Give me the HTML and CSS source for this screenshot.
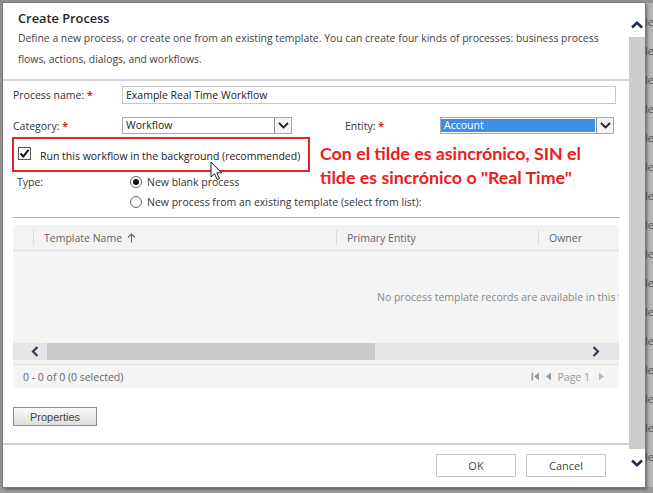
FILE: index.html
```html
<!DOCTYPE html>
<html>
<head>
<meta charset="utf-8">
<link rel="stylesheet" href="styles.css">
</head>
<body>
<div class="desktop">
  <div class="dialog">
    <div class="content">
      <header class="head">
        <h1 class="title">Create Process</h1>
        <p class="desc">Define a new process, or create one from an existing template. You can create four kinds of processes: business process<br>flows, actions, dialogs, and workflows.</p>
      </header>
      <div class="form">
        <div class="row row-name">
          <span class="lbl lbl-main">Process name: <span class="req">*</span></span>
          <div class="input">Example Real Time Workflow</div>
        </div>
        <div class="row row-cat">
          <span class="lbl lbl-main">Category: <span class="req">*</span></span>
          <div class="select sel-cat"><span class="sel-text">Workflow</span><span class="sel-arrow"><svg width="11" height="7" viewBox="0 0 11 7"><polyline points="1,1 5.5,5.5 10,1" fill="none" stroke="#222" stroke-width="1.8"/></svg></span></div>
          <span class="lbl lbl-entity">Entity: <span class="req">*</span></span>
          <div class="select sel-entity"><span class="sel-text sel-on">Account</span><span class="sel-arrow"><svg width="11" height="7" viewBox="0 0 11 7"><polyline points="1,1 5.5,5.5 10,1" fill="none" stroke="#222" stroke-width="1.8"/></svg></span></div>
        </div>
        <div class="highlight">
          <span class="checkbox"><svg width="11" height="11" viewBox="0 0 11 11"><polyline points="1.5,5.5 4.3,8.5 9.5,1.8" fill="none" stroke="#111" stroke-width="2"/></svg></span>
          <span class="chk-label">Run this workflow in the background (recommended)</span>
        </div>
        <div class="row row-type">
          <span class="lbl lbl-type">Type:</span>
          <span class="radio radio-on"></span>
          <span class="opt">New blank process</span>
        </div>
        <div class="row row-radio2">
          <span class="radio"></span>
          <span class="opt">New process from an existing template (select from list):</span>
        </div>
      </div>
      <div class="sep"></div>
      <div class="grid">
        <div class="grid-head">
          <span class="col col-first"></span>
          <span class="col col-name">Template Name <svg width="9" height="10" viewBox="0 0 9 10"><path d="M4.5 9.5V1M1 4.5L4.5 1L8 4.5" fill="none" stroke="#666" stroke-width="1.1"/></svg></span>
          <span class="col col-entity">Primary Entity</span>
          <span class="col col-owner">Owner</span>
        </div>
        <div class="grid-body">
          <span class="empty">No process template records are available in this v</span>
        </div>
        <div class="hscroll">
          <span class="hs-btn"><svg width="8" height="11" viewBox="0 0 8 11"><polyline points="6.5,1 2,5.5 6.5,10" fill="none" stroke="#2a3e5c" stroke-width="2.2"/></svg></span>
          <span class="hs-thumb"></span>
          <span class="hs-track"></span>
          <span class="hs-btn hs-right"><svg width="8" height="11" viewBox="0 0 8 11"><polyline points="1.5,1 6,5.5 1.5,10" fill="none" stroke="#2a3e5c" stroke-width="2.2"/></svg></span>
        </div>
        <div class="grid-foot">
          <span class="count">0 - 0 of 0 (0 selected)</span>
          <span class="pager">
            <svg width="9" height="9" viewBox="0 0 9 9"><rect x="0.5" y="0.5" width="1.6" height="8" fill="#9a9a9a"/><polygon points="8,0.5 3,4.5 8,8.5" fill="#9a9a9a"/></svg>
            <svg width="7" height="9" viewBox="0 0 7 9"><polygon points="6,0.5 1,4.5 6,8.5" fill="#9a9a9a"/></svg>
            <span class="page">Page 1</span>
            <svg width="7" height="9" viewBox="0 0 7 9"><polygon points="1,0.5 6,4.5 1,8.5" fill="#b8b8b8"/></svg>
          </span>
        </div>
      </div>
      <div class="props-area">
        <button class="btn-props">Properties</button>
      </div>
      <footer class="foot">
        <button class="btn">OK</button>
        <button class="btn">Cancel</button>
      </footer>
    </div>
    <div class="vscroll">
      <div class="vs-up"><svg width="12" height="8" viewBox="0 0 12 8"><polyline points="1,6.5 6,1.8 11,6.5" fill="none" stroke="#1d2f50" stroke-width="2.6"/></svg></div>
      <div class="vs-track"></div>
      <div class="vs-down"><svg width="12" height="8" viewBox="0 0 12 8"><polyline points="1,1.5 6,6.2 11,1.5" fill="none" stroke="#1d2f50" stroke-width="2.6"/></svg></div>
    </div>
  </div>
  <div class="behind">
    <span>le</span><span>le</span><span>le</span><span>le</span><span>le</span><span>le</span><span>le</span><span>le</span><span>le</span><span>le</span><span>le</span><span>le</span><span>le</span><span>le</span><span>le</span><span>le</span>
  </div>
</div>
<div class="bottom-strip"></div>
<p class="note">Con el tilde es asincrónico, SIN el<br>tilde es sincrónico o "Real Time"</p>
<svg class="cursor" width="13" height="20" viewBox="0 0 13 20"><path d="M1 1V16L4.5 12.8L7.2 18.6L9.4 17.6L6.8 11.9H11.6Z" fill="#fff" stroke="#222" stroke-width="1" stroke-linejoin="round"/></svg>
</body>
</html>
```
FILE: styles.css
```css
* { box-sizing: border-box; }
html, body { margin: 0; padding: 0; }
body {
  width: 653px;
  height: 493px;
  overflow: hidden;
  position: relative;
  background: #8f8f8f;
  font-family: "Open Sans", "Noto Sans", sans-serif;
  font-size: 10.5px;
  color: #333;
}
.desktop {
  display: flex;
  height: 487px;
  padding: 3px 0 0 3px;
}
.dialog {
  width: 642px;
  height: 484px;
  display: flex;
  background: #fff;
  box-shadow: 0 0 0 1px #777, 2px 2px 3px rgba(0,0,0,0.45);
  position: relative;
  z-index: 1;
}
.content {
  width: 626px;
  display: flex;
  flex-direction: column;
}
.head {
  height: 78px;
  padding: 5px 10px 0 15px;
  border-bottom: 2px solid #d4d4d4;
}
.title {
  margin: 0;
  font-size: 12.8px;
  font-weight: 600;
  line-height: 20px;
  color: #262626;
}
.desc {
  margin: 0;
  font-size: 10.4px;
  line-height: 21px;
  color: #444;
}
.form {
  padding: 5px 0 0 10px;
}
.row {
  display: flex;
  align-items: center;
}
.lbl { color: #333; }
.req { color: #e0201e; font-weight: 700; }
.lbl-main { width: 109px; }
.row-name { height: 18px; }
.input {
  width: 494px;
  height: 18px;
  border: 1px solid #c8c8c8;
  padding: 0 3px;
  line-height: 16px;
  color: #222;
}
.row-cat { height: 17px; margin-top: 13px; }
.select {
  height: 17px;
  border: 1px solid #a9a9a9;
  display: flex;
  align-items: stretch;
}
.sel-cat { width: 170px; }
.sel-entity { width: 174px; }
.sel-text {
  flex: 1;
  padding-left: 3px;
  line-height: 15px;
  color: #222;
}
.sel-on {
  background: #3e90e6;
  color: #fff;
  margin: 1px 1px 1px 0;
  line-height: 13px;
}
.sel-arrow {
  width: 17px;
  border-left: 1px solid #8a8a8a;
  display: flex;
  align-items: center;
  justify-content: center;
  background: #f4f4f4;
}
.lbl-entity { margin-left: 53px; width: 95px; }
.highlight {
  margin: 3px 0 0 -1px;
  width: 298px;
  height: 35px;
  border: 2px solid #e42329;
  display: flex;
  align-items: center;
  padding-left: 4px;
}
.checkbox {
  width: 13px;
  height: 13px;
  border: 1px solid #555;
  display: flex;
  align-items: center;
  justify-content: center;
  background: #fff;
  margin-top: -2px;
}
.chk-label { margin-left: 9px; color: #222; padding-top: 2px; }
.row-type { height: 16px; margin-top: 2px; padding-left: 4px; }
.lbl-type { width: 113px; }
.radio {
  width: 12px;
  height: 12px;
  border-radius: 50%;
  border: 1px solid #666;
  background: #fff;
  display: inline-flex;
  align-items: center;
  justify-content: center;
}
.radio-on::after {
  content: "";
  width: 6px;
  height: 6px;
  border-radius: 50%;
  background: #111;
}
.opt { margin-left: 5px; color: #333; }
.row-radio2 { height: 16px; margin-top: 4px; padding-left: 117px; }
.sep {
  margin: 7px 9px 0 10px;
  height: 1px;
  background: #b3b3b3;
}
.grid {
  margin: 7px 10px 0 10px;
  height: 163px;
  background: #f4f4f4;
  display: flex;
  flex-direction: column;
  color: #666;
}
.grid-head {
  height: 26px;
  display: flex;
  align-items: center;
  border-bottom: 1px solid #e0e0e0;
  background: #f3f3f3;
}
.col {
  display: flex;
  align-items: center;
  height: 15px;
  border-left: 1px solid #dcdcdc;
  padding-left: 10px;
}
.col-first { width: 20px; border-left: none; }
.col-name { width: 303px; gap: 5px; }
.col-entity { width: 202px; }
.col-owner { flex: 1; }
.grid-body {
  height: 92px;
  overflow: hidden;
  display: flex;
  align-items: center;
  padding-left: 364px;
  white-space: nowrap;
  color: #888;
}
.hscroll {
  height: 17px;
  display: flex;
  align-items: stretch;
  background: #e6e6e6;
}
.hs-btn {
  width: 34px;
  display: flex;
  align-items: center;
  justify-content: center;
  padding-left: 10px;
}
.hs-right { width: 40px; padding-left: 0; padding-right: 6px; }
.hs-thumb { width: 328px; background: #cbcbcb; }
.hs-track { flex: 1; }
.grid-foot {
  margin-top: 4px;
  height: 24px;
  border-top: 1px solid #e2e2e2;
  display: flex;
  align-items: center;
  justify-content: space-between;
  padding: 0 14px 0 10px;
}
.count { color: #666; }
.pager { display: flex; align-items: center; gap: 5px; color: #999; }
.page { margin: 0 3px 0 1px; color: #999; }
.props-area {
  padding: 19px 0 0 10px;
  height: 57px;
  border-bottom: 2px solid #d0d0d0;
}
.btn-props {
  width: 84px;
  height: 19px;
  border: 1px solid #8c8c8c;
  background: linear-gradient(#fafafa, #dedede);
  font-family: "Liberation Sans", Arial, sans-serif;
  font-size: 11px;
  color: #444;
  padding: 0;
}
.foot {
  flex: 1;
  display: flex;
  justify-content: flex-end;
  align-items: flex-start;
  padding: 9px 23px 0 0;
  gap: 10px;
}
.btn {
  width: 80px;
  height: 23px;
  border: 1px solid #c6c6c6;
  background: #fff;
  font-family: "Open Sans", sans-serif;
  font-size: 11px;
  color: #444;
  padding: 0;
}
.vscroll {
  width: 16px;
  display: flex;
  flex-direction: column;
}
.vs-up {
  height: 34px;
  display: flex;
  align-items: center;
  justify-content: center;
  padding-top: 10px;
}
.vs-track { flex: 1; background: #cdcdcd; }
.vs-down {
  height: 38px;
  display: flex;
  align-items: flex-start;
  justify-content: center;
  padding-top: 10px;
}
.behind {
  flex: 1;
  background: #b5b5b5;
  overflow: hidden;
  display: flex;
  flex-direction: column;
  padding-top: 12px;
  font-size: 11px;
  color: #555;
  margin-left: 1px;
}
.behind span { height: 29px; line-height: 14px; margin-left: -1px; }
.bottom-strip {
  height: 6px;
  background: #9a9a9a;
}
.note {
  position: absolute;
  left: 320px;
  top: 141px;
  margin: 0;
  font-family: "Lato", "Open Sans", sans-serif;
  font-weight: 700;
  font-size: 17.8px;
  line-height: 24px;
  color: #ee1c1c;
  z-index: 2;
}
.cursor {
  position: absolute;
  left: 210px;
  top: 161px;
  z-index: 3;
}
```
